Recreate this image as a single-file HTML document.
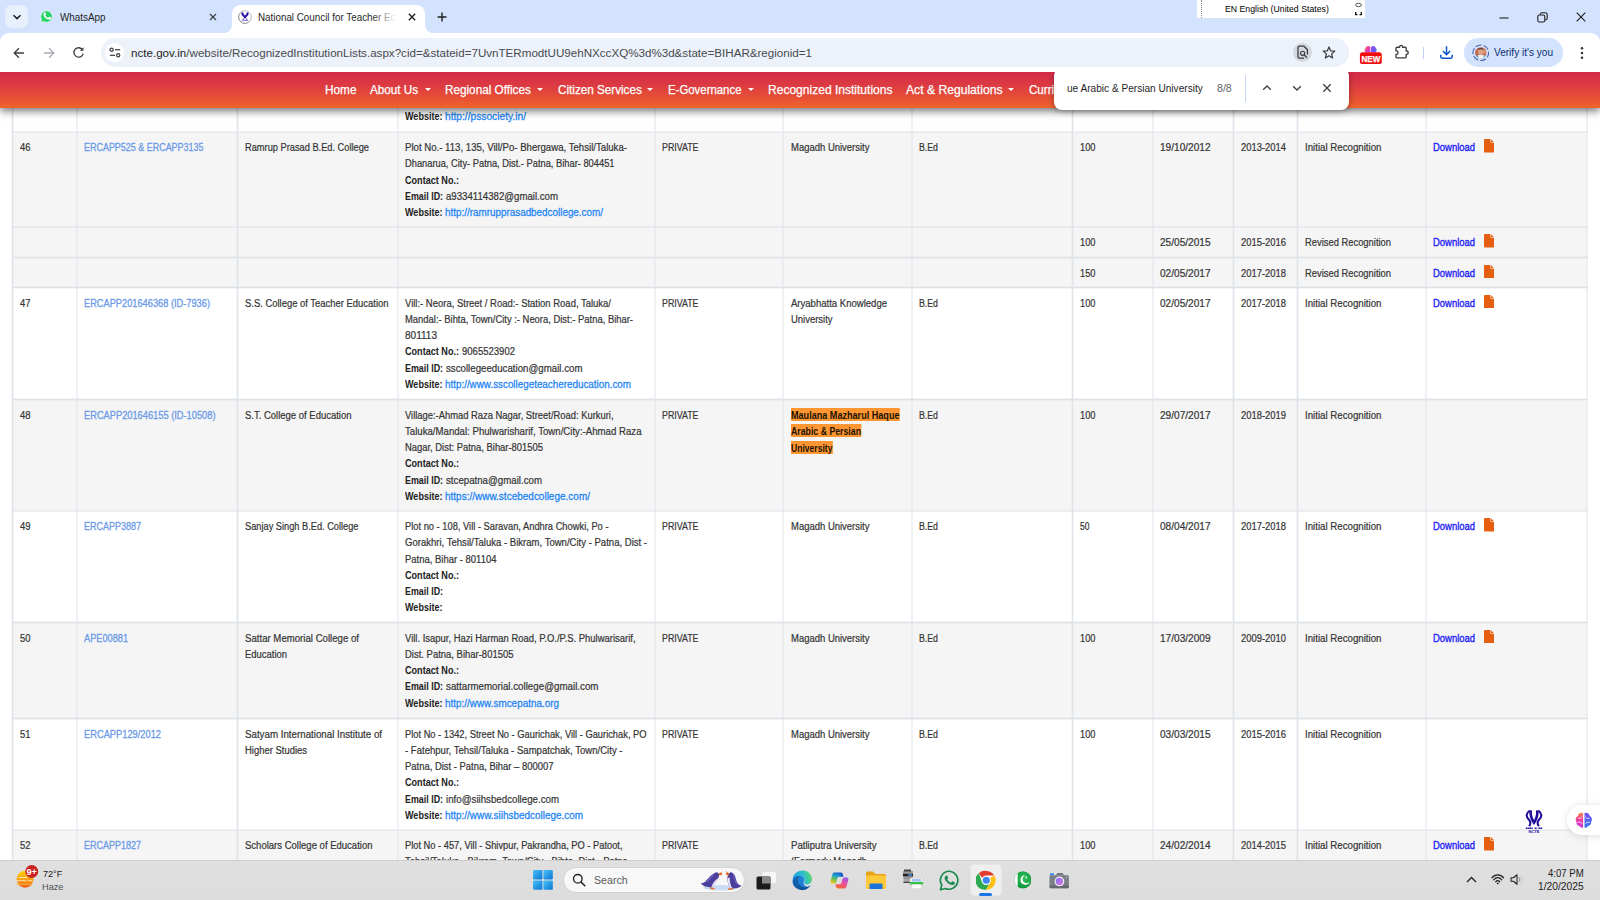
<!DOCTYPE html>
<html lang="en">
<head>
<meta charset="utf-8">
<title>National Council for Teacher Education</title>
<style>
html,body{margin:0;padding:0;}
body{width:1600px;height:900px;overflow:hidden;position:relative;background:#fff;font-family:"Liberation Sans",sans-serif;}
*{box-sizing:border-box;}
.abs{position:absolute;}
/* ---------- page ---------- */
#page{position:absolute;left:0;top:72px;width:1600px;height:788px;overflow:hidden;background:#fff;}
.row{position:absolute;left:12.5px;width:1574.5px;background:#fff;}
.row.g{background:#f5f5f5;}
.hl_{position:absolute;left:11.8px;width:1576px;height:2.6px;margin-top:-.3px;background:linear-gradient(180deg,rgba(220,225,231,0),rgba(220,225,231,1) 50%,rgba(220,225,231,0));}
.vl{position:absolute;top:0;height:800px;width:2.6px;margin-left:-.3px;background:linear-gradient(90deg,rgba(223,227,234,0),rgba(223,227,234,1) 50%,rgba(223,227,234,0));}
.t{position:absolute;white-space:pre;font-size:11.7px;line-height:16.25px;height:16.25px;color:#363636;transform-origin:0 50%;-webkit-text-stroke:0.24px #363636;}
.t.b{font-weight:700;color:#222;-webkit-text-stroke:0;}
.t.id{color:#6a9ae8;-webkit-text-stroke:0.32px #6a9ae8;}
.t.lk{color:#1c84f4;-webkit-text-stroke:0.28px #1c84f4;}
.t.dl{color:#2020fa;-webkit-text-stroke:0.36px #2020fa;}
.t.hl{font-weight:700;color:#1a1200;background:#ff9632;height:13px;line-height:13px;margin-top:1.4px;-webkit-text-stroke:0;}
.fi{position:absolute;}

/* ---------- nav ---------- */
#nav{position:absolute;left:0;top:0;width:1600px;height:36px;background:linear-gradient(180deg,#d42b4a 0%,#dc3a42 35%,#e85234 75%,#f0632c 100%);box-shadow:0 3px 8px rgba(0,0,0,.55);}
.nt{position:absolute;top:9.3px;height:19px;line-height:19px;font-size:12.6px;color:#fff;white-space:pre;transform-origin:0 50%;-webkit-text-stroke:0.25px #fff;}
.car{position:absolute;top:16.3px;width:0;height:0;border-left:3.5px solid transparent;border-right:3.5px solid transparent;border-top:3.8px solid #fff;margin-left:-.5px}
/* ---------- find bar ---------- */
#find{position:absolute;left:1054px;top:67.5px;width:295px;height:42px;background:#fff;border-radius:8px;box-shadow:0 1px 6px rgba(0,0,0,.35);}
#find .q{position:absolute;left:12.6px;top:12.4px;height:17px;line-height:17px;font-size:10.8px;color:#1f1f1f;white-space:pre;transform-origin:0 50%;}
#find .c{position:absolute;left:162.6px;top:12.4px;height:17px;line-height:17px;font-size:10.8px;color:#5f6368;white-space:pre;transform-origin:0 50%;}
#find .sep{position:absolute;left:191px;top:7.5px;width:1px;height:26.5px;background:#c4d4f2;}
#find svg{position:absolute;top:15.9px;}
/* ---------- chrome ---------- */
#tabs{position:absolute;left:0;top:0;width:1600px;height:45px;background:#d3e3fd;}
#toolbar{position:absolute;left:0;top:32.5px;width:1600px;height:39.5px;background:#fff;border-radius:9px 9px 0 0;}
#tsearch{position:absolute;left:5px;top:5px;width:23px;height:23px;border-radius:7px;background:#e8effd;}
.tabt{position:absolute;top:10.8px;height:14px;line-height:14px;font-size:10.2px;color:#1f1f1f;white-space:pre;transform-origin:0 50%;}
#atab{position:absolute;left:231.7px;top:5px;width:193.5px;height:28px;background:#fff;border-radius:8.5px 8.5px 0 0;}
#atab:before,#atab:after{content:"";position:absolute;bottom:0;width:8px;height:8px;}
#atab:before{left:-8px;background:radial-gradient(circle at 0 0,rgba(255,255,255,0) 7.6px,#fff 8.2px);}
#atab:after{right:-8px;background:radial-gradient(circle at 100% 0,rgba(255,255,255,0) 7.6px,#fff 8.2px);}
#omni{position:absolute;left:100.5px;top:38.2px;width:1248.5px;height:28.4px;border-radius:14.2px;background:#edf2fa;}
#url{position:absolute;left:131px;top:44px;height:17px;line-height:17px;font-size:11.7px;color:#1f1f1f;white-space:pre;transform-origin:0 50%;}
#url i{font-style:normal;color:#474a4f;}
#ime{position:absolute;left:1196.5px;top:0;width:168.7px;height:17.8px;background:#fff;}
#ime span{position:absolute;left:28.2px;top:2.9px;height:13px;line-height:13px;font-size:9.3px;color:#000;white-space:pre;transform-origin:0 50%;}
#prof{position:absolute;left:1464px;top:38.4px;width:99px;height:28.2px;border-radius:14.1px;background:#d3e3fd;}
#prof span{position:absolute;left:30px;top:7.8px;height:14px;line-height:14px;font-size:10.3px;color:#0a2e6e;white-space:pre;transform-origin:0 50%;}
.ic{position:absolute;}
/* ---------- taskbar ---------- */
#task{position:absolute;left:0;top:860px;width:1600px;height:40px;background:linear-gradient(180deg,#e0e0e0,#dcdcdc);box-shadow:inset 0 1px 0 #cdcdcd;}
#task .tx{position:absolute;font-size:9.5px;line-height:13px;height:13px;white-space:pre;color:#1b1b1b;transform-origin:0 50%;}
#sbox{position:absolute;left:563px;top:7px;width:182px;height:25.5px;border-radius:12.75px;background:#f8f8f8;border:1px solid #d2d2d2;}
</style>
</head>
<body>
<div id="page">
<div class="row" style="top:28.00px;height:32.00px"></div>
<div class="row g" style="top:60.00px;height:95.00px"></div>
<div class="row g" style="top:155.00px;height:30.50px"></div>
<div class="row g" style="top:185.50px;height:30.00px"></div>
<div class="row" style="top:215.50px;height:112.00px"></div>
<div class="row g" style="top:327.50px;height:111.50px"></div>
<div class="row" style="top:439.00px;height:111.50px"></div>
<div class="row g" style="top:550.50px;height:96.00px"></div>
<div class="row" style="top:646.50px;height:111.50px"></div>
<div class="row g" style="top:758.00px;height:112.00px"></div>
<div class="hl_" style="top:59.00px"></div>
<div class="hl_" style="top:154.00px"></div>
<div class="hl_" style="top:184.50px"></div>
<div class="hl_" style="top:214.50px"></div>
<div class="hl_" style="top:326.50px"></div>
<div class="hl_" style="top:438.00px"></div>
<div class="hl_" style="top:549.50px"></div>
<div class="hl_" style="top:645.50px"></div>
<div class="hl_" style="top:757.00px"></div>
<div class="vl" style="left:11.50px"></div>
<div class="vl" style="left:76.00px"></div>
<div class="vl" style="left:236.50px"></div>
<div class="vl" style="left:397.00px"></div>
<div class="vl" style="left:654.00px"></div>
<div class="vl" style="left:782.00px"></div>
<div class="vl" style="left:911.00px"></div>
<div class="vl" style="left:1071.50px"></div>
<div class="vl" style="left:1152.00px"></div>
<div class="vl" style="left:1232.50px"></div>
<div class="vl" style="left:1296.50px"></div>
<div class="vl" style="left:1425.00px"></div>
<div class="vl" style="left:1586.00px"></div>
<span class="t b" style="left:405.10px;top:35.95px;transform:scaleX(0.7732)">Website:</span>
<span class="t lk" style="left:445.20px;top:35.95px;transform:scaleX(0.8739)">http://pssociety.in/</span>
<span class="t" style="left:20.00px;top:67.15px;transform:scaleX(0.8067)">46</span>
<span class="t id" style="left:84.00px;top:67.15px;transform:scaleX(0.7664)">ERCAPP525 &amp; ERCAPP3135</span>
<span class="t" style="left:245.00px;top:67.15px;transform:scaleX(0.7920)">Ramrup Prasad B.Ed. College</span>
<span class="t" style="left:662.30px;top:67.15px;transform:scaleX(0.7560)">PRIVATE</span>
<span class="t" style="left:791.00px;top:67.15px;transform:scaleX(0.8110)">Magadh University</span>
<span class="t" style="left:919.30px;top:67.15px;transform:scaleX(0.7497)">B.Ed</span>
<span class="t" style="left:1080.30px;top:67.15px;transform:scaleX(0.7942)">100</span>
<span class="t" style="left:1160.30px;top:67.15px;transform:scaleX(0.8632)">19/10/2012</span>
<span class="t" style="left:1240.80px;top:67.15px;transform:scaleX(0.8049)">2013-2014</span>
<span class="t" style="left:1304.80px;top:67.15px;transform:scaleX(0.8291)">Initial Recognition</span>
<span class="t dl" style="left:1433.20px;top:67.15px;transform:scaleX(0.8079)">Download</span>
<span class="t" style="left:405.10px;top:67.15px;transform:scaleX(0.8234)">Plot No.- 113, 135, Vill/Po- Bhergawa, Tehsil/Taluka-</span>
<span class="t" style="left:405.10px;top:83.40px;transform:scaleX(0.7962)">Dhanarua, City- Patna, Dist.- Patna, Bihar- 804451</span>
<span class="t b" style="left:405.10px;top:99.65px;transform:scaleX(0.7773)">Contact No.:</span>
<span class="t b" style="left:405.10px;top:115.90px;transform:scaleX(0.7598)">Email ID:</span>
<span class="t" style="left:446.20px;top:115.90px;transform:scaleX(0.8250)">a9334114382@gmail.com</span>
<span class="t b" style="left:405.10px;top:132.15px;transform:scaleX(0.7732)">Website:</span>
<span class="t lk" style="left:445.20px;top:132.15px;transform:scaleX(0.8444)">http://ramrupprasadbedcollege.com/</span>
<span class="t" style="left:1080.30px;top:162.15px;transform:scaleX(0.7942)">100</span>
<span class="t" style="left:1160.30px;top:162.15px;transform:scaleX(0.8632)">25/05/2015</span>
<span class="t" style="left:1240.80px;top:162.15px;transform:scaleX(0.8049)">2015-2016</span>
<span class="t" style="left:1304.80px;top:162.15px;transform:scaleX(0.8022)">Revised Recognition</span>
<span class="t dl" style="left:1433.20px;top:162.15px;transform:scaleX(0.8079)">Download</span>
<span class="t" style="left:1080.30px;top:192.65px;transform:scaleX(0.7942)">150</span>
<span class="t" style="left:1160.30px;top:192.65px;transform:scaleX(0.8632)">02/05/2017</span>
<span class="t" style="left:1240.80px;top:192.65px;transform:scaleX(0.8049)">2017-2018</span>
<span class="t" style="left:1304.80px;top:192.65px;transform:scaleX(0.8022)">Revised Recognition</span>
<span class="t dl" style="left:1433.20px;top:192.65px;transform:scaleX(0.8079)">Download</span>
<span class="t" style="left:20.00px;top:222.65px;transform:scaleX(0.8067)">47</span>
<span class="t id" style="left:84.00px;top:222.65px;transform:scaleX(0.7915)">ERCAPP201646368 (ID-7936)</span>
<span class="t" style="left:245.00px;top:222.65px;transform:scaleX(0.8070)">S.S. College of Teacher Education</span>
<span class="t" style="left:662.30px;top:222.65px;transform:scaleX(0.7560)">PRIVATE</span>
<span class="t" style="left:791.00px;top:222.65px;transform:scaleX(0.8163)">Aryabhatta Knowledge</span>
<span class="t" style="left:791.00px;top:238.90px;transform:scaleX(0.8088)">University</span>
<span class="t" style="left:919.30px;top:222.65px;transform:scaleX(0.7497)">B.Ed</span>
<span class="t" style="left:1080.30px;top:222.65px;transform:scaleX(0.7942)">100</span>
<span class="t" style="left:1160.30px;top:222.65px;transform:scaleX(0.8632)">02/05/2017</span>
<span class="t" style="left:1240.80px;top:222.65px;transform:scaleX(0.8049)">2017-2018</span>
<span class="t" style="left:1304.80px;top:222.65px;transform:scaleX(0.8291)">Initial Recognition</span>
<span class="t dl" style="left:1433.20px;top:222.65px;transform:scaleX(0.8079)">Download</span>
<span class="t" style="left:405.10px;top:222.65px;transform:scaleX(0.8103)">Vill:- Neora, Street / Road:- Station Road, Taluka/</span>
<span class="t" style="left:405.10px;top:238.90px;transform:scaleX(0.8057)">Mandal:- Bihta, Town/City :- Neora, Dist:- Patna, Bihar-</span>
<span class="t" style="left:405.10px;top:255.15px;transform:scaleX(0.8587)">801113</span>
<span class="t b" style="left:405.10px;top:271.40px;transform:scaleX(0.7773)">Contact No.:</span>
<span class="t" style="left:462.20px;top:271.40px;transform:scaleX(0.8152)">9065523902</span>
<span class="t b" style="left:405.10px;top:287.65px;transform:scaleX(0.7598)">Email ID:</span>
<span class="t" style="left:446.20px;top:287.65px;transform:scaleX(0.8296)">sscollegeeducation@gmail.com</span>
<span class="t b" style="left:405.10px;top:303.90px;transform:scaleX(0.7732)">Website:</span>
<span class="t lk" style="left:445.20px;top:303.90px;transform:scaleX(0.8420)">http://www.sscollegeteachereducation.com</span>
<span class="t" style="left:20.00px;top:334.65px;transform:scaleX(0.8067)">48</span>
<span class="t id" style="left:84.00px;top:334.65px;transform:scaleX(0.7937)">ERCAPP201646155 (ID-10508)</span>
<span class="t" style="left:245.00px;top:334.65px;transform:scaleX(0.8114)">S.T. College of Education</span>
<span class="t" style="left:662.30px;top:334.65px;transform:scaleX(0.7560)">PRIVATE</span>
<span class="t hl" style="left:791.00px;top:334.65px;transform:scaleX(0.7770)">Maulana Mazharul Haque</span>
<span class="t hl" style="left:791.00px;top:350.90px;transform:scaleX(0.7483)">Arabic &amp; Persian</span>
<span class="t hl" style="left:791.00px;top:367.15px;transform:scaleX(0.7343)">University</span>
<span class="t" style="left:919.30px;top:334.65px;transform:scaleX(0.7497)">B.Ed</span>
<span class="t" style="left:1080.30px;top:334.65px;transform:scaleX(0.7942)">100</span>
<span class="t" style="left:1160.30px;top:334.65px;transform:scaleX(0.8632)">29/07/2017</span>
<span class="t" style="left:1240.80px;top:334.65px;transform:scaleX(0.8049)">2018-2019</span>
<span class="t" style="left:1304.80px;top:334.65px;transform:scaleX(0.8291)">Initial Recognition</span>
<span class="t" style="left:405.10px;top:334.65px;transform:scaleX(0.8030)">Village:-Ahmad Raza Nagar, Street/Road: Kurkuri,</span>
<span class="t" style="left:405.10px;top:350.90px;transform:scaleX(0.8243)">Taluka/Mandal: Phulwarisharif, Town/City:-Ahmad Raza</span>
<span class="t" style="left:405.10px;top:367.15px;transform:scaleX(0.8045)">Nagar, Dist: Patna, Bihar-801505</span>
<span class="t b" style="left:405.10px;top:383.40px;transform:scaleX(0.7773)">Contact No.:</span>
<span class="t b" style="left:405.10px;top:399.65px;transform:scaleX(0.7598)">Email ID:</span>
<span class="t" style="left:446.20px;top:399.65px;transform:scaleX(0.8289)">stcepatna@gmail.com</span>
<span class="t b" style="left:405.10px;top:415.90px;transform:scaleX(0.7732)">Website:</span>
<span class="t lk" style="left:445.20px;top:415.90px;transform:scaleX(0.8551)">https://www.stcebedcollege.com/</span>
<span class="t" style="left:20.00px;top:446.15px;transform:scaleX(0.8067)">49</span>
<span class="t id" style="left:84.00px;top:446.15px;transform:scaleX(0.7695)">ERCAPP3887</span>
<span class="t" style="left:245.00px;top:446.15px;transform:scaleX(0.7904)">Sanjay Singh B.Ed. College</span>
<span class="t" style="left:662.30px;top:446.15px;transform:scaleX(0.7560)">PRIVATE</span>
<span class="t" style="left:791.00px;top:446.15px;transform:scaleX(0.8110)">Magadh University</span>
<span class="t" style="left:919.30px;top:446.15px;transform:scaleX(0.7497)">B.Ed</span>
<span class="t" style="left:1080.30px;top:446.15px;transform:scaleX(0.7299)">50</span>
<span class="t" style="left:1160.30px;top:446.15px;transform:scaleX(0.8632)">08/04/2017</span>
<span class="t" style="left:1240.80px;top:446.15px;transform:scaleX(0.8049)">2017-2018</span>
<span class="t" style="left:1304.80px;top:446.15px;transform:scaleX(0.8291)">Initial Recognition</span>
<span class="t dl" style="left:1433.20px;top:446.15px;transform:scaleX(0.8079)">Download</span>
<span class="t" style="left:405.10px;top:446.15px;transform:scaleX(0.7977)">Plot no - 108, Vill - Saravan, Andhra Chowki, Po -</span>
<span class="t" style="left:405.10px;top:462.40px;transform:scaleX(0.8165)">Gorakhri, Tehsil/Taluka - Bikram, Town/City - Patna, Dist -</span>
<span class="t" style="left:405.10px;top:478.65px;transform:scaleX(0.8109)">Patna, Bihar - 801104</span>
<span class="t b" style="left:405.10px;top:494.90px;transform:scaleX(0.7773)">Contact No.:</span>
<span class="t b" style="left:405.10px;top:511.15px;transform:scaleX(0.7598)">Email ID:</span>
<span class="t b" style="left:405.10px;top:527.40px;transform:scaleX(0.7732)">Website:</span>
<span class="t" style="left:20.00px;top:557.65px;transform:scaleX(0.8067)">50</span>
<span class="t id" style="left:84.00px;top:557.65px;transform:scaleX(0.7873)">APE00881</span>
<span class="t" style="left:245.00px;top:557.65px;transform:scaleX(0.8238)">Sattar Memorial College of</span>
<span class="t" style="left:245.00px;top:573.90px;transform:scaleX(0.8079)">Education</span>
<span class="t" style="left:662.30px;top:557.65px;transform:scaleX(0.7560)">PRIVATE</span>
<span class="t" style="left:791.00px;top:557.65px;transform:scaleX(0.8110)">Magadh University</span>
<span class="t" style="left:919.30px;top:557.65px;transform:scaleX(0.7497)">B.Ed</span>
<span class="t" style="left:1080.30px;top:557.65px;transform:scaleX(0.7942)">100</span>
<span class="t" style="left:1160.30px;top:557.65px;transform:scaleX(0.8632)">17/03/2009</span>
<span class="t" style="left:1240.80px;top:557.65px;transform:scaleX(0.8049)">2009-2010</span>
<span class="t" style="left:1304.80px;top:557.65px;transform:scaleX(0.8291)">Initial Recognition</span>
<span class="t dl" style="left:1433.20px;top:557.65px;transform:scaleX(0.8079)">Download</span>
<span class="t" style="left:405.10px;top:557.65px;transform:scaleX(0.8083)">Vill. Isapur, Hazi Harman Road, P.O./P.S. Phulwarisarif,</span>
<span class="t" style="left:405.10px;top:573.90px;transform:scaleX(0.8106)">Dist. Patna, Bihar-801505</span>
<span class="t b" style="left:405.10px;top:590.15px;transform:scaleX(0.7773)">Contact No.:</span>
<span class="t b" style="left:405.10px;top:606.40px;transform:scaleX(0.7598)">Email ID:</span>
<span class="t" style="left:446.20px;top:606.40px;transform:scaleX(0.8347)">sattarmemorial.college@gmail.com</span>
<span class="t b" style="left:405.10px;top:622.65px;transform:scaleX(0.7732)">Website:</span>
<span class="t lk" style="left:445.20px;top:622.65px;transform:scaleX(0.8478)">http://www.smcepatna.org</span>
<span class="t" style="left:20.00px;top:653.65px;transform:scaleX(0.8067)">51</span>
<span class="t id" style="left:84.00px;top:653.65px;transform:scaleX(0.7954)">ERCAPP129/2012</span>
<span class="t" style="left:245.00px;top:653.65px;transform:scaleX(0.8335)">Satyam International Institute of</span>
<span class="t" style="left:245.00px;top:669.90px;transform:scaleX(0.8086)">Higher Studies</span>
<span class="t" style="left:662.30px;top:653.65px;transform:scaleX(0.7560)">PRIVATE</span>
<span class="t" style="left:791.00px;top:653.65px;transform:scaleX(0.8110)">Magadh University</span>
<span class="t" style="left:919.30px;top:653.65px;transform:scaleX(0.7497)">B.Ed</span>
<span class="t" style="left:1080.30px;top:653.65px;transform:scaleX(0.7942)">100</span>
<span class="t" style="left:1160.30px;top:653.65px;transform:scaleX(0.8632)">03/03/2015</span>
<span class="t" style="left:1240.80px;top:653.65px;transform:scaleX(0.8049)">2015-2016</span>
<span class="t" style="left:1304.80px;top:653.65px;transform:scaleX(0.8291)">Initial Recognition</span>
<span class="t" style="left:405.10px;top:653.65px;transform:scaleX(0.7967)">Plot No - 1342, Street No - Gaurichak, Vill - Gaurichak, PO</span>
<span class="t" style="left:405.10px;top:669.90px;transform:scaleX(0.8180)">- Fatehpur, Tehsil/Taluka - Sampatchak, Town/City -</span>
<span class="t" style="left:405.10px;top:686.15px;transform:scaleX(0.8076)">Patna, Dist - Patna, Bihar – 800007</span>
<span class="t b" style="left:405.10px;top:702.40px;transform:scaleX(0.7773)">Contact No.:</span>
<span class="t b" style="left:405.10px;top:718.65px;transform:scaleX(0.7598)">Email ID:</span>
<span class="t" style="left:446.20px;top:718.65px;transform:scaleX(0.8312)">info@siihsbedcollege.com</span>
<span class="t b" style="left:405.10px;top:734.90px;transform:scaleX(0.7732)">Website:</span>
<span class="t lk" style="left:445.20px;top:734.90px;transform:scaleX(0.8497)">http://www.siihsbedcollege.com</span>
<span class="t" style="left:20.00px;top:765.15px;transform:scaleX(0.8067)">52</span>
<span class="t id" style="left:84.00px;top:765.15px;transform:scaleX(0.7695)">ERCAPP1827</span>
<span class="t" style="left:245.00px;top:765.15px;transform:scaleX(0.8143)">Scholars College of Education</span>
<span class="t" style="left:662.30px;top:765.15px;transform:scaleX(0.7560)">PRIVATE</span>
<span class="t" style="left:791.00px;top:765.15px;transform:scaleX(0.8226)">Patliputra University</span>
<span class="t" style="left:791.00px;top:781.40px;transform:scaleX(0.7959)">(Formerly Magadh</span>
<span class="t" style="left:919.30px;top:765.15px;transform:scaleX(0.7497)">B.Ed</span>
<span class="t" style="left:1080.30px;top:765.15px;transform:scaleX(0.7942)">100</span>
<span class="t" style="left:1160.30px;top:765.15px;transform:scaleX(0.8632)">24/02/2014</span>
<span class="t" style="left:1240.80px;top:765.15px;transform:scaleX(0.8049)">2014-2015</span>
<span class="t" style="left:1304.80px;top:765.15px;transform:scaleX(0.8291)">Initial Recognition</span>
<span class="t dl" style="left:1433.20px;top:765.15px;transform:scaleX(0.8079)">Download</span>
<span class="t" style="left:405.10px;top:765.15px;transform:scaleX(0.7959)">Plot No - 457, Vill - Shivpur, Pakrandha, PO - Patoot,</span>
<span class="t" style="left:405.10px;top:781.40px;transform:scaleX(0.8099)">Tehsil/Taluka - Bikram, Town/City - Bihta, Dist - Patna,</span>
<svg class="fi" style="left:1484px;top:67.00px" width="10.2" height="13.6" viewBox="0 0 20.4 27.2"><path d="M2 0h11.500l6.900 7v18.200a2 2 0 0 1-2 2H2a2 2 0 0 1-2-2V2a2 2 0 0 1 2-2z" fill="#e65f10"/><path d="M13.200 .3v5.200a1.600 1.600 0 0 0 1.600 1.600h5.300" fill="none" stroke="#fbe3d2" stroke-width="1.500"/></svg>
<svg class="fi" style="left:1484px;top:162.00px" width="10.2" height="13.6" viewBox="0 0 20.4 27.2"><path d="M2 0h11.500l6.900 7v18.200a2 2 0 0 1-2 2H2a2 2 0 0 1-2-2V2a2 2 0 0 1 2-2z" fill="#e65f10"/><path d="M13.200 .3v5.200a1.600 1.600 0 0 0 1.600 1.600h5.300" fill="none" stroke="#fbe3d2" stroke-width="1.500"/></svg>
<svg class="fi" style="left:1484px;top:192.50px" width="10.2" height="13.6" viewBox="0 0 20.4 27.2"><path d="M2 0h11.500l6.900 7v18.200a2 2 0 0 1-2 2H2a2 2 0 0 1-2-2V2a2 2 0 0 1 2-2z" fill="#e65f10"/><path d="M13.200 .3v5.200a1.600 1.600 0 0 0 1.600 1.600h5.300" fill="none" stroke="#fbe3d2" stroke-width="1.500"/></svg>
<svg class="fi" style="left:1484px;top:222.50px" width="10.2" height="13.6" viewBox="0 0 20.4 27.2"><path d="M2 0h11.500l6.900 7v18.200a2 2 0 0 1-2 2H2a2 2 0 0 1-2-2V2a2 2 0 0 1 2-2z" fill="#e65f10"/><path d="M13.200 .3v5.200a1.600 1.600 0 0 0 1.600 1.600h5.300" fill="none" stroke="#fbe3d2" stroke-width="1.500"/></svg>
<svg class="fi" style="left:1484px;top:446.00px" width="10.2" height="13.6" viewBox="0 0 20.4 27.2"><path d="M2 0h11.500l6.900 7v18.200a2 2 0 0 1-2 2H2a2 2 0 0 1-2-2V2a2 2 0 0 1 2-2z" fill="#e65f10"/><path d="M13.200 .3v5.200a1.600 1.600 0 0 0 1.600 1.600h5.300" fill="none" stroke="#fbe3d2" stroke-width="1.500"/></svg>
<svg class="fi" style="left:1484px;top:557.50px" width="10.2" height="13.6" viewBox="0 0 20.4 27.2"><path d="M2 0h11.500l6.900 7v18.200a2 2 0 0 1-2 2H2a2 2 0 0 1-2-2V2a2 2 0 0 1 2-2z" fill="#e65f10"/><path d="M13.200 .3v5.200a1.600 1.600 0 0 0 1.600 1.600h5.300" fill="none" stroke="#fbe3d2" stroke-width="1.500"/></svg>
<svg class="fi" style="left:1484px;top:765.00px" width="10.2" height="13.6" viewBox="0 0 20.4 27.2"><path d="M2 0h11.500l6.900 7v18.200a2 2 0 0 1-2 2H2a2 2 0 0 1-2-2V2a2 2 0 0 1 2-2z" fill="#e65f10"/><path d="M13.200 .3v5.200a1.600 1.600 0 0 0 1.600 1.600h5.300" fill="none" stroke="#fbe3d2" stroke-width="1.500"/></svg>

<div id="nav">
<span class="nt" style="left:325px;transform:scaleX(0.9377)">Home</span>
<span class="nt" style="left:370px;transform:scaleX(0.9303)">About Us</span><i class="car" style="left:425.2px"></i>
<span class="nt" style="left:445px;transform:scaleX(0.9309)">Regional Offices</span><i class="car" style="left:537.8px"></i>
<span class="nt" style="left:557.5px;transform:scaleX(0.9280)">Citizen Services</span><i class="car" style="left:647.8px"></i>
<span class="nt" style="left:667.5px;transform:scaleX(0.9051)">E-Governance</span><i class="car" style="left:748px"></i>
<span class="nt" style="left:767.5px;transform:scaleX(0.9561)">Recognized Institutions</span>
<span class="nt" style="left:905.5px;transform:scaleX(0.9639)">Act &amp; Regulations</span><i class="car" style="left:1008.5px"></i>
<span class="nt" style="left:1028.5px;transform:scaleX(0.9197)">Curriculum</span>
</div>
<!-- floating widgets -->
<svg class="ic" style="left:1525.300px;top:737.700px" width="18" height="23" viewBox="0 0 36 46">
 <g fill="none" stroke="#22109a" stroke-linecap="butt">
  <path d="M9.500 1.500C1.500 7 1.500 13 8 19.500c3.500 3.500 3 9 .5 13" stroke-width="4.200"/>
  <path d="M26.500 1.500C34.500 7 34.500 13 28 19.500c-3.500 3.500-3 9-.5 13" stroke-width="4.200"/>
  <path d="M11.500 .8C10.500 10 13.500 19 18 25.500 22.500 19 25.500 10 24.500 .8" stroke-width="5.200" stroke-linejoin="miter"/>
 </g>
 <path d="M1.500 36.500h14M19.500 36.500h5M27 36.500h7.500" stroke="#22109a" stroke-width="2.600" stroke-dasharray="3.400 .7"/>
 <text x="18" y="45.600" font-family="Liberation Sans,sans-serif" font-size="7.200" font-weight="700" fill="#22109a" text-anchor="middle" textLength="22" lengthAdjust="spacingAndGlyphs">NCTE</text>
</svg>
<div class="abs" style="left:1567px;top:733px;width:40px;height:30px;border-radius:15px 0 0 15px;background:#fff;box-shadow:0 1px 8px rgba(0,0,0,.13)"></div>
<svg class="ic" style="left:1574.600px;top:740.200px" width="17.600" height="16.600" viewBox="0 0 36 34">
 <defs><linearGradient id="bl" x1="0" y1="0" x2="0" y2="1"><stop offset="0" stop-color="#f58a3c"/><stop offset=".45" stop-color="#ee3fa0"/><stop offset="1" stop-color="#c837e0"/></linearGradient>
 <linearGradient id="br" x1="0" y1="0" x2="0" y2="1"><stop offset="0" stop-color="#7a4af0"/><stop offset="1" stop-color="#2f7df5"/></linearGradient></defs>
 <path d="M16.500 2C11 0 6 3 6 8 1 10 0 16 3 20c-1 5 3 9 7 9 2 4 6.500 4 6.500 1z" fill="url(#bl)"/>
 <path d="M19.500 2C25 0 30 3 30 8c5 2 6 8 3 12 1 5-3 9-7 9-2 4-6.500 4-6.500 1z" fill="url(#br)"/>
 <g fill="none" stroke="#fff" stroke-width="1.600" stroke-linecap="round" opacity=".9"><path d="M7 13h5l2-3"/><path d="M6 21h6l2 3"/><path d="M29 13h-5l-2-3"/><path d="M30 21h-6l-2 3"/></g>
</svg>

</div>

<div id="find">
 <span class="q" style="transform:scaleX(0.9350)">ue Arabic &amp; Persian University</span>
 <span class="c" style="transform:scaleX(0.9856)">8/8</span>
 <div class="sep"></div>
 <svg style="left:208.400px" width="10" height="10" viewBox="0 0 10 10"><path d="M1.200 6.800 5 3l3.800 3.800" fill="none" stroke="#3c4043" stroke-width="1.300"/></svg>
 <svg style="left:238.400px" width="10" height="10" viewBox="0 0 10 10"><path d="M1.200 3.200 5 7l3.800-3.800" fill="none" stroke="#3c4043" stroke-width="1.300"/></svg>
 <svg style="left:268.400px" width="10" height="10" viewBox="0 0 10 10"><path d="M1.300 1.300l7.400 7.400M8.700 1.300 1.300 8.700" fill="none" stroke="#3c4043" stroke-width="1.300"/></svg>
</div>
<div id="tabs">
 <div id="tsearch"></div>
 <svg class="ic" style="left:11.700px;top:12.700px" width="10" height="8" viewBox="0 0 10 8"><path d="M1.500 2.200 5 5.600 8.500 2.200" fill="none" stroke="#1f1f1f" stroke-width="1.500"/></svg>
 <!-- whatsapp favicon -->
 <svg class="ic" style="left:40.200px;top:10.200px" width="13" height="13" viewBox="0 0 26 26"><path d="M13 1.500A11.500 11.500 0 0 0 3.100 18.800L1.500 24.600l6-1.500A11.500 11.500 0 1 0 13 1.500z" fill="#25d366" stroke="#fff" stroke-width="1.200"/><path d="M9.200 6.800c-.4 0-1 .1-1.500.7-.5.600-1.600 1.600-1.600 3.700 0 2.200 1.600 4.300 1.900 4.600.2.300 3.100 4.900 7.700 6.600 3.800 1.400 4.500.9 5.300.8.800-.1 2.600-1 2.900-2.100.4-1 .4-1.900.3-2.100-.2-.3-.5-.4-1-.7-.5-.2-2.600-1.300-3-1.400-.4-.2-.7-.2-1 .2-.3.500-1.100 1.400-1.400 1.700-.2.300-.5.300-1 .1-.5-.2-1.900-.7-3.600-2.200-1.300-1.200-2.200-2.700-2.500-3.100-.2-.5 0-.7.200-.9l.7-.8c.2-.3.300-.5.500-.8.100-.3.100-.6-.1-.8-.1-.3-1-2.500-1.400-3.400-.3-.8-.7-.7-1-.7z" fill="#fff" transform="translate(1.500 -0.800) scale(.86)"/></svg>
 <span class="tabt" style="left:60px;transform:scaleX(0.9702)">WhatsApp</span>
 <svg class="ic" style="left:209.300px;top:12.600px" width="8" height="8" viewBox="0 0 8 8"><path d="M1 1l6 6M7 1 1 7" stroke="#3c4043" stroke-width="1.200" fill="none"/></svg>
 <div id="atab">
  <svg class="ic" style="left:6.600px;top:4.700px" width="14" height="14" viewBox="0 0 28 28"><defs><linearGradient id="fr" x1="1" y1="0" x2="0" y2="1"><stop offset="0" stop-color="#cfcfcf"/><stop offset="1" stop-color="#4a4a4a"/></linearGradient></defs><circle cx="14" cy="14" r="12.700" fill="#fff" stroke="url(#fr)" stroke-width="1.700"/><g fill="none" stroke-linecap="round"><path d="M14 13.500 9.500 20M14 13.500 18.500 20M9 20.800h10" stroke="#9384da" stroke-width="2.600"/><path d="M8.800 6.500C8.300 9.500 11 11.500 14 13.800 17 11.500 19.700 9.500 19.200 6.500" stroke="#2a12a6" stroke-width="4.200" stroke-linejoin="round"/></g></svg>
  <span class="tabt" style="left:26.800px;top:5.800px;width:172px;transform:scaleX(0.9644)">National Council for Teacher Ed</span>
  <div class="abs" style="left:140.800px;top:3px;width:28px;height:20px;background:linear-gradient(90deg,rgba(255,255,255,0),#fff 85%)"></div>
  <svg class="ic" style="left:176px;top:7.600px" width="8" height="8" viewBox="0 0 8 8"><path d="M.8.800l6.400 6.400M7.200.8.800 7.200" stroke="#1f1f1f" stroke-width="1.350" fill="none"/></svg>
 </div>
 <svg class="ic" style="left:436.600px;top:11.600px" width="10" height="10" viewBox="0 0 10 10"><path d="M5 .6v8.800M.6 5h8.800" stroke="#1f1f1f" stroke-width="1.400" fill="none"/></svg>
 <div id="ime"><i class="abs" style="left:4px;top:0;width:1px;height:17.800px;border-left:1px dotted #8a8a8a"></i><span style="transform:scaleX(0.9387)">EN English (United States)</span>
  <svg class="ic" style="left:157.500px;top:1.500px" width="9" height="14" viewBox="0 0 9 14"><ellipse cx="4.500" cy="3" rx="2.900" ry="1.700" fill="none" stroke="#555" stroke-width="1"/><path d="M1.700 10v2.700h1.800M7.300 10v2.700H5.500" fill="none" stroke="#111" stroke-width="1.300"/></svg>
 </div>
 <svg class="ic" style="left:1498.500px;top:16.500px" width="11" height="2" viewBox="0 0 11 2"><path d="M.5 1h9" stroke="#1f1f1f" stroke-width="1.100"/></svg>
 <svg class="ic" style="left:1537px;top:11.500px" width="11" height="11" viewBox="0 0 11 11"><rect x=".8" y="3" width="7" height="7" rx="1.600" fill="none" stroke="#1f1f1f" stroke-width="1.100"/><path d="M3.200 2.600V2.400A1.600 1.600 0 0 1 4.800.8h3.600A1.800 1.800 0 0 1 10.200 2.600v3.600a1.600 1.600 0 0 1-1.600 1.600h-.4" fill="none" stroke="#1f1f1f" stroke-width="1.100"/></svg>
 <svg class="ic" style="left:1576px;top:12px" width="10" height="10" viewBox="0 0 10 10"><path d="M.7.700l8.600 8.600M9.300.7.700 9.300" stroke="#1f1f1f" stroke-width="1.150" fill="none"/></svg>
</div>
<div id="toolbar"></div>
<!-- nav buttons -->
<svg class="ic" style="left:12.500px;top:46.500px" width="12" height="12" viewBox="0 0 12 12"><path d="M11 6H1.600M6 1.200 1.200 6 6 10.800" fill="none" stroke="#3c4043" stroke-width="1.300"/></svg>
<svg class="ic" style="left:42.500px;top:46.500px" width="12" height="12" viewBox="0 0 12 12"><path d="M1 6h9.400M6 1.200 10.800 6 6 10.800" fill="none" stroke="#a9adb3" stroke-width="1.300"/></svg>
<svg class="ic" style="left:72px;top:46px" width="13" height="13" viewBox="0 0 13 13"><path d="M10.800 4.200A4.700 4.700 0 1 0 11.200 7.600" fill="none" stroke="#3c4043" stroke-width="1.350"/><path d="M11.400 1.200v3.600H7.800z" fill="#3c4043"/></svg>
<div id="omni"></div>
<div class="abs" style="left:104.500px;top:42.600px;width:19.600px;height:19.600px;border-radius:50%;background:#fff"></div>
<svg class="ic" style="left:108.500px;top:46.900px" width="12" height="11" viewBox="0 0 12 11"><g fill="none" stroke="#3c4043" stroke-width="1.250"><circle cx="2.600" cy="2.700" r="1.600"/><path d="M6 2.700h5.200"/><circle cx="9.200" cy="8.300" r="1.600"/><path d="M.8 8.300H6"/></g></svg>
<span id="url" style="transform:scaleX(0.9930)">ncte.gov.in<i>/website/RecognizedInstitutionLists.aspx?cid=&amp;stateid=7UvnTERmodtUU9ehNXccXQ%3d%3d&amp;state=BIHAR&amp;regionid=1</i></span>
<!-- find-in-page icon -->
<div class="abs" style="left:1292.900px;top:42.600px;width:19.200px;height:19.200px;border-radius:50%;background:#d4d8df"></div>


<svg class="ic" style="left:0;top:0" width="1600" height="72" viewBox="0 0 1600 72">
 <g fill="none" stroke="#3a3d42" stroke-width="1.300" stroke-linejoin="round">
  <path d="M1304 58.200H1299.400a1.400 1.400 0 0 1-1.400-1.400V47.600a1.400 1.400 0 0 1 1.400-1.400H1304L1307.400 49.700V54.400"/>
  <circle cx="1302.600" cy="53.300" r="2.050" stroke-width="1.200"/><path d="M1304.100 54.800 1307 57.700"/>
  <path d="M1329.00 46.90L1330.62 50.78L1334.80 51.11L1331.62 53.85L1332.59 57.94L1329.00 55.75L1325.41 57.94L1326.38 53.85L1323.20 51.11L1327.38 50.78z" stroke-width="1.250"/>
  <path d="M1397 47.200H1399.600V46.900a1.500 1.500 0 0 1 3 0V47.200H1405.200a1 1 0 0 1 1 1V51H1406.600a1.650 1.650 0 0 1 0 3.300H1406.200V56.900a1 1 0 0 1-1 1H1397a1 1 0 0 1-1-1V54.400H1396.300a1.750 1.750 0 0 0 0-3.500H1396V48.200a1 1 0 0 1 1-1z" stroke-width="1.350"/>
 </g>
 <defs><linearGradient id="nb1" x1="0" y1="0" x2="1" y2="1"><stop offset="0" stop-color="#f7902a"/><stop offset=".5" stop-color="#ee3fb0"/><stop offset="1" stop-color="#c23ae0"/></linearGradient>
 <linearGradient id="nb2" x1="0" y1="0" x2="1" y2="1"><stop offset="0" stop-color="#a24af0"/><stop offset="1" stop-color="#4a6af5"/></linearGradient></defs>
 <path d="M1370.300 52.400V47c-1.500-1.800-4.600-1.200-4.800 1.300-1.200.9-1.200 3 .1 4.100z" fill="url(#nb1)"/>
 <path d="M1371 52.400V47c1.500-1.800 4.600-1.200 4.800 1.300 1.200.9 1.200 3-.1 4.100z" fill="url(#nb2)"/>
 <rect x="1359.900" y="52.200" width="21.900" height="11.800" rx="2.600" fill="#f20d0d"/>
 <text x="1370.850" y="61.700" font-family="Liberation Sans,sans-serif" font-size="8.600" font-weight="700" fill="#fff" stroke="#fff" stroke-width=".25" text-anchor="middle" textLength="18.700" lengthAdjust="spacingAndGlyphs">NEW</text>
</svg>


<!-- puzzle -->

<div class="abs" style="left:1422.700px;top:46.500px;width:1.200px;height:12px;background:#bfd3f5"></div>
<svg class="ic" style="left:1438.500px;top:45px" width="15" height="15" viewBox="0 0 15 15"><path d="M7.500 1.200v8M3.800 6 7.500 9.600 11.200 6" fill="none" stroke="#0b57d0" stroke-width="1.500"/><path d="M1.800 9.800v2a1.400 1.400 0 0 0 1.400 1.400h8.600a1.400 1.400 0 0 0 1.400-1.400v-2" fill="none" stroke="#0b57d0" stroke-width="1.500"/></svg>
<div id="prof">
 <svg class="ic" style="left:7.800px;top:5.400px" width="17.600" height="17.600" viewBox="0 0 36 36"><defs><clipPath id="avc"><circle cx="18" cy="18" r="11.600"/></clipPath></defs><circle cx="18" cy="18" r="16" fill="none" stroke="#4666ad" stroke-width="2.300" stroke-dasharray="12.500 4.250" stroke-dashoffset="3"/><g clip-path="url(#avc)"><rect x="4" y="4" width="28" height="28" fill="#c2674e"/><rect x="20" y="4" width="12" height="16" fill="#d98a6a"/><ellipse cx="18" cy="16" rx="6" ry="7.200" fill="#d9a284"/><path d="M11.500 12.500c1-5.500 12-5.500 13 0-3.500-2.200-9.500-2.200-13 0z" fill="#4a342c"/><path d="M5 33c1-9 7-10.500 13-10.500s12 1.500 13 10.500z" fill="#eef2f4"/><path d="M5 33c1-7 4-9.500 7.500-10.200L14 33z" fill="#3fa9c4"/><path d="M31 33c-1-7-4-9.500-7.500-10.200L22 33z" fill="#7fc4d4"/></g></svg>
 <span style="transform:scaleX(0.9777)">Verify it's you</span>
</div>
<svg class="ic" style="left:1579.500px;top:45.500px" width="4" height="14" viewBox="0 0 4 14"><circle cx="2" cy="2.200" r="1.250" fill="#30343a"/><circle cx="2" cy="7" r="1.250" fill="#30343a"/><circle cx="2" cy="11.800" r="1.250" fill="#30343a"/></svg>


<div id="task">
 <!-- weather -->
 <svg class="ic" style="left:14px;top:4px" width="26" height="26" viewBox="0 0 52 52">
  <defs><linearGradient id="sun" x1="0" y1="0" x2="0" y2="1"><stop offset="0" stop-color="#ffd400"/><stop offset=".55" stop-color="#fb9a12"/><stop offset="1" stop-color="#ee5a10"/></linearGradient></defs>
  <circle cx="22.200" cy="30.500" r="16.800" fill="url(#sun)"/>
  <g stroke="#fff1c4" stroke-width="2.400" stroke-linecap="round" opacity=".92"><path d="M10 27h16"/><path d="M5 33.500h19M29 33.500h7"/></g>
  <path d="M4.500 40.500h29" stroke="#f8c060" stroke-width="2.200" stroke-linecap="round" opacity=".85"/>
  <circle cx="35.500" cy="15" r="13" fill="#cb2020"/>
  <text x="35.500" y="21" font-family="Liberation Sans,sans-serif" font-size="16.500" font-weight="700" fill="#fff" text-anchor="middle" textLength="21" lengthAdjust="spacingAndGlyphs">9+</text>
 </svg>
 <span class="tx" style="left:42.500px;top:6.800px;transform:scaleX(0.9568)">72°F</span>
 <span class="tx" style="left:42px;top:20.100px;color:#505050;transform:scaleX(0.9690)">Haze</span>
 <!-- start -->
 <svg class="ic" style="left:532.500px;top:10px" width="20" height="20" viewBox="0 0 20 20"><defs><linearGradient id="win" x1="0" y1="0" x2="1" y2="1"><stop offset="0" stop-color="#4cc2f5"/><stop offset="1" stop-color="#0a78d8"/></linearGradient></defs><g fill="url(#win)"><rect x="0" y="0" width="9.400" height="9.400" rx=".8"/><rect x="10.400" y="0" width="9.400" height="9.400" rx=".8"/><rect x="0" y="10.400" width="9.400" height="9.400" rx=".8"/><rect x="10.400" y="10.400" width="9.400" height="9.400" rx=".8"/></g></svg>
 <div id="sbox"></div>
 <svg class="ic" style="left:571.500px;top:13px" width="14" height="14" viewBox="0 0 14 14"><circle cx="5.800" cy="5.800" r="4.300" fill="none" stroke="#1f1f1f" stroke-width="1.350"/><path d="M9 9l3.800 3.800" stroke="#1f1f1f" stroke-width="1.500" stroke-linecap="round"/></svg>
 <span class="tx" style="left:593.700px;top:12px;height:16px;line-height:16px;font-size:11.700px;color:#5a5a5a;transform:scaleX(0.9124)">Search</span>
 <!-- penguins -->
 <svg class="ic" style="left:700px;top:8px" width="46" height="24" viewBox="700 868 46 24">
  <ellipse cx="720.600" cy="887.800" rx="17.500" ry="2.700" fill="#c9dcf3"/>
  <path d="M716.500 872.300C713 873 709 877.500 706 881 704.500 882.500 702.500 883.200 701 883 702 885 704 886.600 707 886.800L711 887.600C714 885.500 717 881 718.800 877 719.600 875 719 872.600 716.500 872.300Z" fill="#4b3f9e"/>
  <path d="M713.500 875C711 877 708.500 880 707 882" stroke="#7a6cd0" stroke-width="1.100" fill="none" opacity=".8"/>
  <path d="M718.300 878C716.600 882 714 885.600 711.300 887.400 712.300 883.800 715 880 718.300 878Z" fill="#ebe6fa"/>
  <path d="M718.600 873.700 722.200 871.700 721.500 873.300 722.300 875 719.300 875.300Z" fill="#e8601c"/>
  <path d="M710 887.200 714.600 888 714.200 889.400 710.600 889Z" fill="#ea6a1e"/>
  <path d="M731 872.300C733.500 872.800 735 875 735.600 878 736.200 881 737.500 883.600 739 884.800 740 885.400 741 885.600 741.600 885.500 740.500 887 738.500 888 736 888.200L730.500 888.400C728.600 886 727.500 882 727.500 878.500 727.500 876 728 873 731 872.300Z" fill="#4b3f9e"/>
  <path d="M733.200 874.500C734.300 877 735 881 736.800 884" stroke="#7a6cd0" stroke-width="1.100" fill="none" opacity=".8"/>
  <path d="M727.900 878C727.500 882 728.600 886 730.600 888.300L732.400 888.200C730.400 885.500 729.500 881.500 729.700 877.500Z" fill="#ebe6fa"/>
  <path d="M729.300 873.900 725.500 870.500 726.800 872.900 725.200 873.700 728.400 875.700Z" fill="#e8601c"/>
  <path d="M728.200 888.300 733 888.200 733.200 889.600 728 889.700Z" fill="#ea6a1e"/>
 </svg>
 <!-- task view -->
 <svg class="ic" style="left:755.500px;top:10.500px" width="21" height="19" viewBox="0 0 21 19"><rect x="6" y=".5" width="14.500" height="12" rx="1.500" fill="#f6f6f6" stroke="#d8d8d8" stroke-width=".6"/><rect x=".5" y="5.500" width="14" height="13" rx="1.500" fill="#1c1c1c"/><rect x="6" y="5.500" width="8.500" height="7" fill="#8a8a8a"/></svg>
 <!-- edge -->
 <svg class="ic" style="left:792.200px;top:9.800px" width="20.400" height="20.400" viewBox="0 0 40 40"><defs><linearGradient id="ed1" x1="0" y1="0.300" x2="1" y2="0.100"><stop offset="0" stop-color="#1b9de2"/><stop offset=".55" stop-color="#2fc0c8"/><stop offset="1" stop-color="#62dd5a"/></linearGradient><linearGradient id="ed2" x1="0" y1="0" x2="1" y2="1"><stop offset="0" stop-color="#1467b8"/><stop offset="1" stop-color="#0a4a94"/></linearGradient></defs>
 <path d="M14 12C20 10 25 15 24.500 19 24 22 22 24 23 27 24 30 27 33 31 32 26 36 16 34 12.500 26 10.500 21 11 15 14 12Z" fill="#1e7fd6"/>
 <path d="M1.200 22C0 10 9.500 .8 21 .8 32 .8 39.200 9 39.200 18 39.200 24 34.500 28.200 29.500 28.200 25.500 28.200 23.500 26 24 24 24.800 21.500 25.500 19.500 24 16.500 22 12.500 18 11 14 12 8 13 2.500 17 1.200 22Z" fill="url(#ed1)"/>
 <path d="M1.200 22C2.500 15 9 11.500 15.500 12 12.500 14 11 18 12 22.500 13.500 29.500 20 34.500 28 33.500 31.500 33 34.500 31.500 37 29.500 33.500 36 26.500 40 19 39.300 9 38.500.5 31 1.200 22Z" fill="url(#ed2)"/>
</svg>
 <!-- copilot -->
 <svg class="ic" style="left:829.800px;top:11.500px" width="18.800" height="17" viewBox="0 0 40 36"><defs><linearGradient id="cp1" x1="0.600" y1="0" x2="0.200" y2="1"><stop offset="0" stop-color="#1a5fd6"/><stop offset=".35" stop-color="#23a8c8"/><stop offset=".65" stop-color="#72c44a"/><stop offset="1" stop-color="#f7c61a"/></linearGradient><linearGradient id="cp2" x1="0.800" y1="0" x2="0.300" y2="1"><stop offset="0" stop-color="#9456f2"/><stop offset=".5" stop-color="#ee4f9c"/><stop offset="1" stop-color="#f26a2a"/></linearGradient></defs>
 <path d="M9.500 1H22C25 1 27 3 27.600 5.500L28.600 10H20.500C17.500 10 16 12 15.400 14L13.400 21C12.800 23 11.500 24.500 9 24.500H4.500C1.800 24.500.2 22 1.100 19L5 5C5.800 2.200 7.200 1 9.500 1Z" fill="url(#cp1)"/>
 <path d="M30.500 35H18C15 35 13 33 12.400 30.500L11.400 26H19.500C22.500 26 24 24 24.600 22L26.600 15C27.200 13 28.500 11.500 31 11.500H35.500C38.200 11.500 39.800 14 38.900 17L35 31C34.200 33.800 32.800 35 30.500 35Z" fill="url(#cp2)"/>
 <path d="M22 1C25 1 27 3 27.600 5.500L28.600 10H22.500z" fill="#1548b8" opacity=".55"/>
</svg>
 <!-- explorer -->
 <svg class="ic" style="left:865px;top:10.500px" width="22" height="19" viewBox="0 0 44 38"><path d="M2 4a3 3 0 0 1 3-3h11l5 5h18a3 3 0 0 1 3 3v4H2z" fill="#e8a317"/><rect x="2" y="9" width="40" height="27" rx="3" fill="#fbc93a"/><path d="M11 25h22a2 2 0 0 1 2 2v9H9v-9a2 2 0 0 1 2-2z" fill="#1a73d8"/></svg>
 <!-- printer -->
 <svg class="ic" style="left:901.500px;top:9px" width="22" height="21" viewBox="0 0 44 42"><rect x="2" y="4" width="20" height="26" fill="#d8d8d8"/><rect x="2" y="4" width="20" height="4" fill="#9a9a9a"/><rect x="4" y="1" width="14" height="4" fill="#444"/><rect x="2" y="9" width="20" height="6" fill="#222"/><rect x="12" y="10.500" width="8" height="3" fill="#4a8ae0"/><rect x="3" y="17" width="18" height="2" fill="#555"/><rect x="3" y="21" width="18" height="2" fill="#777"/><rect x="3" y="25" width="18" height="3" fill="#444"/><rect x="16" y="18" width="26" height="15" rx="2" fill="#f2f2f2" stroke="#c2c2c2"/><rect x="20" y="20" width="18" height="5" fill="#9ec2ec"/><rect x="16" y="26" width="26" height="5" fill="#35c04a"/><rect x="20" y="31" width="18" height="8" fill="#fff" stroke="#d0d0d0" stroke-width=".8"/></svg>
 <!-- whatsapp -->
 <svg class="ic" style="left:937.500px;top:8.500px" width="23" height="23" viewBox="0 0 46 46"><path d="M23 4.500A18 18 0 0 0 7.500 32L5 41.500l9.600-2.500A18 18 0 1 0 23 4.500z" fill="none" stroke="#1c8a4e" stroke-width="3.400" stroke-linejoin="round"/><path d="M17.500 13.500c-.6 0-1.400.2-2 .9-.7.800-2.300 2.300-2.300 5.300s2.300 6 2.600 6.400c.4.400 4.400 6.900 10.900 9.300 5.400 2 6.400 1.300 7.500 1.200 1.100-.1 3.700-1.500 4.200-3 .5-1.400.5-2.700.4-3-.2-.3-.6-.5-1.300-.9-.7-.3-3.700-1.800-4.300-2-.6-.2-1-.3-1.500.3-.4.700-1.600 2-2 2.400-.3.400-.7.500-1.400.2-.7-.3-2.700-1-5.100-3.100-1.900-1.700-3.100-3.800-3.500-4.400-.3-.7 0-1 .3-1.300l1-1.100c.3-.4.400-.7.700-1.100.2-.5.100-.8-.1-1.200-.2-.3-1.400-3.500-2-4.800-.5-1.100-1-1-1.400-1z" fill="#1c8a4e" transform="translate(2.800 2.500) scale(.8)"/></svg>
 <!-- chrome (active) -->
 <div class="abs" style="left:970px;top:4px;width:31.700px;height:31.500px;border-radius:4px;background:#efefef;border:1px solid #e6e6e6"></div>
 <svg class="ic" style="left:975.500px;top:9.800px" width="20.600" height="20.600" viewBox="0 0 44 44"><circle cx="22" cy="22" r="20" fill="#fff"/><path d="M22 2a20 20 0 0 1 17.300 10H22a10 10 0 0 0-8.700 5L6 6.800A20 20 0 0 1 22 2z" fill="#e33b2e"/><path d="M39.300 12A20 20 0 0 1 21 42l8.700-15a10 10 0 0 0 0-10z" transform="translate(0 0)" fill="#fbc116"/><path d="M21 42A20 20 0 0 1 6 6.800L13.300 27a10 10 0 0 0 8.700 5 10 10 0 0 0 7.700-5z" fill="#2da94f"/><circle cx="22" cy="22" r="9.400" fill="#fff"/><circle cx="22" cy="22" r="7.600" fill="#3f86f4"/></svg>
 <div class="abs" style="left:979.300px;top:33.100px;width:12.800px;height:3px;border-radius:1.500px;background:#1a76e6"></div>
 <!-- green moon -->
 <svg class="ic" style="left:1013.500px;top:11px" width="17.800" height="17.800" viewBox="0 0 36 36"><defs><clipPath id="pk"><circle cx="18" cy="18" r="17.400"/></clipPath><radialGradient id="pkg" cx=".55" cy=".4" r=".7"><stop offset="0" stop-color="#2fc45a"/><stop offset="1" stop-color="#0a8a34"/></radialGradient></defs><g clip-path="url(#pk)"><rect width="36" height="36" fill="url(#pkg)"/><rect width="7.500" height="36" fill="#fbfbfb"/><path d="M26.500 10.500A9.500 9.500 0 1 0 30 25 8 8 0 1 1 26.500 10.500z" fill="#fff" transform="rotate(-20 20 18)"/><circle cx="25" cy="13" r="1.700" fill="#fff"/></g></svg>
 <!-- camera -->
 <svg class="ic" style="left:1048.800px;top:11.500px" width="20.400" height="17" viewBox="0 0 42 35"><defs><linearGradient id="lens" x1="0" y1="0" x2="1" y2="1"><stop offset="0" stop-color="#7a6cf5"/><stop offset="1" stop-color="#e37ae0"/></linearGradient></defs><rect x="2" y="2.500" width="8" height="4" rx="1" fill="#2a8ae6"/><path d="M14 7l3-5h11l3 5z" fill="#72767d"/><rect x="1" y="6.500" width="40" height="27" rx="3" fill="#7b7f86"/><rect x="1" y="28" width="40" height="5.500" rx="2.500" fill="#666a70"/><circle cx="21.500" cy="19.500" r="10" fill="#f3f1fa"/><circle cx="21.500" cy="19.500" r="7.600" fill="url(#lens)"/><circle cx="36.500" cy="11.500" r="1.300" fill="#d0d0d0"/></svg>
 <!-- tray -->
 <svg class="ic" style="left:1465.500px;top:16px" width="11" height="7" viewBox="0 0 11 7"><path d="M1 6 5.500 1.500 10 6" fill="none" stroke="#1f1f1f" stroke-width="1.250"/></svg>
 <svg class="ic" style="left:1490.700px;top:14.300px" width="13.500" height="10.800" viewBox="0 0 30 24"><g fill="none" stroke="#1f1f1f" stroke-width="2.700" stroke-linecap="round"><path d="M2 8.500C9-.5 21-.5 28 8.500"/><path d="M6 13c5-6.500 13-6.500 18 0"/><path d="M10.500 17.500c2.500-3.500 6.500-3.500 9 0"/></g><circle cx="15" cy="21" r="2" fill="#1f1f1f"/></svg>
 <svg class="ic" style="left:1510px;top:13px" width="14" height="13" viewBox="0 0 28 26"><path d="M2 9.500h5l7-6v19l-7-6H2z" fill="none" stroke="#1f1f1f" stroke-width="2.100" stroke-linejoin="round"/><path d="M18 9c2 2 2 6 0 8" fill="none" stroke="#777" stroke-width="1.800" stroke-linecap="round"/><path d="M21.500 5.500c4 4 4 11 0 15" fill="none" stroke="#bdbdbd" stroke-width="1.800" stroke-linecap="round"/></svg>
 <span class="tx" style="left:1548px;top:6.500px;font-size:10px;transform:scaleX(0.9584)">4:07 PM</span>
 <span class="tx" style="left:1538px;top:19.900px;font-size:10px;transform:scaleX(1.0270)">1/20/2025</span>
</div>

</body>
</html>
